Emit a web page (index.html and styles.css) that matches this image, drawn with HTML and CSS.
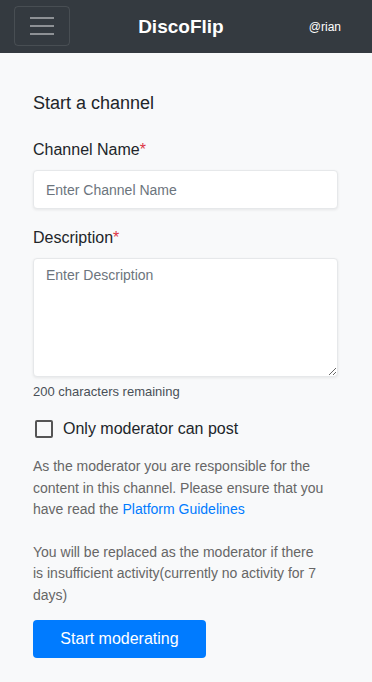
FILE: index.html
```html
<!DOCTYPE html>
<html lang="en">
<head>
  <meta charset="UTF-8" />
  <meta name="viewport" content="width=device-width, initial-scale=1" />
  <title>DiscoFlip - Start a channel</title>
  <link rel="stylesheet" href="styles.css">
</head>
<body>
  <nav class="navbar">
    <button class="toggler" aria-label="Menu">
      <span class="toggler-icon"></span>
    </button>
    <div class="brand">DiscoFlip</div>
    <div class="user">@rian</div>
  </nav>

  <main class="page">
    <h2 class="title">Start a channel</h2>

    <form class="channel-form">
      <div class="field">
        <label for="name">Channel Name<span class="req">*</span></label>
        <input id="name" class="control" type="text" placeholder="Enter Channel Name">
      </div>

      <div class="field">
        <label for="desc">Description<span class="req">*</span></label>
        <textarea id="desc" class="control area" placeholder="Enter Description"></textarea>
        <div class="hint">200 characters remaining</div>
      </div>

      <label class="check">
        <input type="checkbox">
        <span class="box"></span>
        <span>Only moderator can post</span>
      </label>

      <p class="note">As the moderator you are responsible for the content in this channel. Please ensure that you have read the <a href="#">Platform Guidelines</a></p>

      <p class="note">You will be replaced as the moderator if there is insufficient activity(currently no activity for 7 days)</p>

      <button type="button" class="submit">Start moderating</button>
    </form>
  </main>
</body>
</html>
```

FILE: styles.css
```css
body {
  margin: 0;
  font-family: "Liberation Sans", Arial, sans-serif;
  background: #f8f9fa;
  color: #212529;
}

/* ヘッダー */
.navbar {
  height: 53px;
  background: #343a40;
  display: flex;
  align-items: center;
  padding: 0 31px 0 14px;
  box-sizing: border-box;
}
.toggler {
  width: 56px;
  height: 40px;
  margin-top: -1px;
  background: transparent;
  border: 1px solid rgba(255,255,255,0.1);
  border-radius: 4px;
  display: flex;
  align-items: center;
  justify-content: center;
  padding: 0;
}
.toggler-icon {
  display: block;
  width: 24px;
  height: 2px;
  background: #8e9195;
  box-shadow: 0 -8px 0 #8e9195, 0 8px 0 #8e9195;
}
.brand {
  flex: 1;
  text-align: center;
  color: #fff;
  font-weight: 700;
  font-size: 19px;
}
.user {
  color: #fff;
  font-size: 12px;
  padding-left: 17px;
}

/* 本文 */
.page {
  padding: 38px 34px 24px 33px;
}
.title {
  font-size: 18px;
  font-weight: 500;
  margin: 0 0 24px;
  line-height: 24px;
}
.field {
  margin-bottom: 18px;
}
.field label {
  display: block;
  font-size: 16px;
  line-height: 22px;
  margin-bottom: 9px;
}
.req { color: #dc3545; }
.control {
  display: block;
  width: 100%;
  box-sizing: border-box;
  height: 39px;
  padding: 8px 12px;
  font-family: inherit;
  font-size: 14px;
  color: #495057;
  background: #fff;
  border: 1px solid #e6e8ea;
  border-radius: 4px;
  box-shadow: 0 1px 3px rgba(0,0,0,0.08);
}
.control::placeholder { color: #6c757d; }
.area {
  height: 119px;
  resize: vertical;
  padding-top: 8px;
}
.hint {
  font-size: 13px;
  color: #495057;
  margin-top: 6px;
  line-height: 18px;
}
.check {
  display: flex;
  align-items: center;
  font-size: 16px;
  margin: 19px 0 18px 2px;
  cursor: pointer;
}
.check input { display: none; }
.check .box {
  width: 14px;
  height: 14px;
  border: 2px solid #555;
  border-radius: 2px;
  margin-right: 10px;
}
.note {
  font-size: 14px;
  line-height: 21.5px;
  color: #666;
  margin: 0 0 21px;
  padding-right: 12px;
}
.note a {
  color: #007bff;
  text-decoration: none;
}
.submit {
  background: #007bff;
  color: #fff;
  border: none;
  border-radius: 4px;
  font-family: inherit;
  font-size: 16px;
  height: 38px;
  width: 173px;
  padding: 0;
  white-space: nowrap;
  cursor: pointer;
  margin-top: -7px;
}
```
